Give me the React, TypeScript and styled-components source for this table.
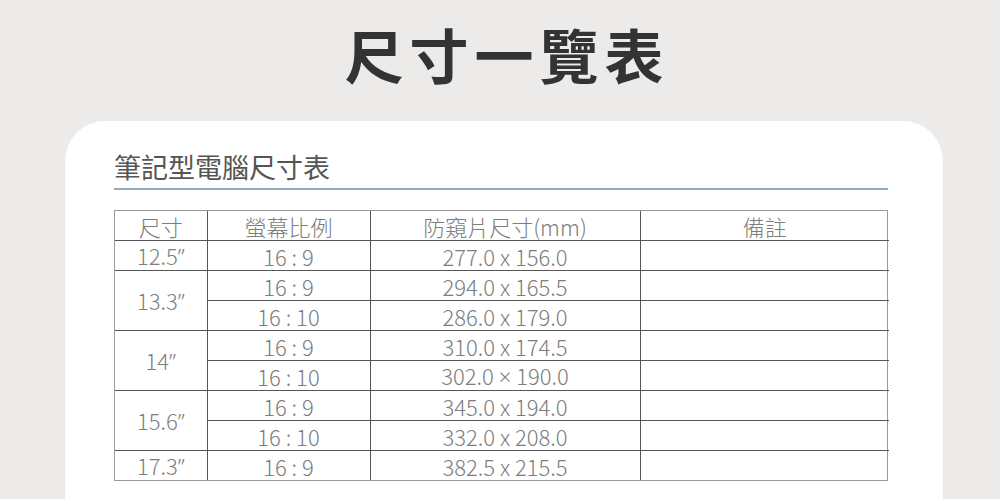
import React from "react";
import styled, { createGlobalStyle } from "styled-components";

const Global = createGlobalStyle`
  html, body { margin: 0; padding: 0; }
  body {
    background: #ecebe9;
    font-family: "Noto Sans CJK TC", "Noto Sans", sans-serif;
    overflow: hidden;
  }
`;

const Page = styled.div`
  width: 1000px;
  height: 499px;
  display: flex;
  flex-direction: column;
  overflow: hidden;
`;

const Title = styled.h1`
  margin: 21px 0 0 14px;
  font-size: 59px;
  line-height: 66px;
  font-weight: 700;
  color: #333333;
  letter-spacing: 6px;
  text-align: center;
`;

const Card = styled.section`
  margin: 34px 0 0 65px;
  width: 878px;
  flex: 1;
  background: #ffffff;
  border-radius: 40px 40px 0 0;
  padding: 28px 55px 0 49px;
  box-sizing: border-box;
`;

const Subtitle = styled.h2`
  margin: 0;
  font-size: 27px;
  line-height: 36px;
  font-weight: 400;
  color: #555555;
  padding-bottom: 3px;
  border-bottom: 2px solid #8eaac1;
`;

const TableFrame = styled.div`
  margin-top: 20px;
  border: 1px solid #9a9a9a;
`;

const Grid = styled.table`
  width: 100%;
  border-collapse: collapse;
  border-style: hidden;
  table-layout: fixed;
`;

const Cell = styled.td`
  height: 29px;
  padding: 0;
  border: 1px solid #555555;
  text-align: center;
  vertical-align: middle;
  font-size: 22px;
  line-height: 28px;
  font-weight: 300;
  color: #7d7d7d;
  white-space: nowrap;
`;

const Head = styled(Cell).attrs({ as: "th" })`
  font-weight: 300;
`;

const Latin = styled.span`
  font-family: "Noto Sans", sans-serif;
  font-weight: 300;
`;

type Row = { size?: string; span?: number; ratio: string; dims: React.ReactNode };

const Inch = ({ v }: { v: string }) => (
  <>
    {v}
    <Latin>”</Latin>
  </>
);

const rows: Row[] = [
  { size: "12.5", span: 1, ratio: "16 : 9", dims: "277.0 x 156.0" },
  { size: "13.3", span: 2, ratio: "16 : 9", dims: "294.0 x 165.5" },
  { ratio: "16 : 10", dims: "286.0 x 179.0" },
  { size: "14", span: 2, ratio: "16 : 9", dims: "310.0 x 174.5" },
  {
    ratio: "16 : 10",
    dims: (
      <>
        302.0 <Latin>×</Latin> 190.0
      </>
    ),
  },
  { size: "15.6", span: 2, ratio: "16 : 9", dims: "345.0 x 194.0" },
  { ratio: "16 : 10", dims: "332.0 x 208.0" },
  { size: "17.3", span: 1, ratio: "16 : 9", dims: "382.5 x 215.5" },
];

export default function App() {
  return (
    <Page>
      <Global />
      <Title>尺寸一覽表</Title>
      <Card>
        <Subtitle>筆記型電腦尺寸表</Subtitle>
        <TableFrame>
          <Grid>
            <colgroup>
              <col style={{ width: 92 }} />
              <col style={{ width: 163 }} />
              <col style={{ width: 270 }} />
              <col style={{ width: 249 }} />
            </colgroup>
            <thead>
              <tr>
                <Head>尺寸</Head>
                <Head>螢幕比例</Head>
                <Head>防窺片尺寸(mm)</Head>
                <Head>備註</Head>
              </tr>
            </thead>
            <tbody>
              {rows.map((r, i) => (
                <tr key={i}>
                  {r.size && (
                    <Cell rowSpan={r.span}>
                      <Inch v={r.size} />
                    </Cell>
                  )}
                  <Cell>{r.ratio}</Cell>
                  <Cell>{r.dims}</Cell>
                  <Cell />
                </tr>
              ))}
            </tbody>
          </Grid>
        </TableFrame>
      </Card>
    </Page>
  );
}
